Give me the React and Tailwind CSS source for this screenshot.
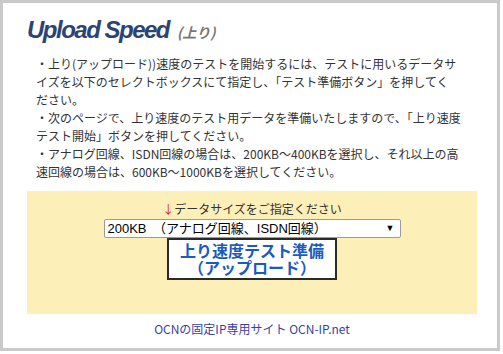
const jp = { fontFamily: '"Noto Sans CJK JP", "Noto Sans", sans-serif' };

const lines = [
  "・上り(アップロード))速度のテストを開始するには、テストに用いるデータサ",
  "イズを以下のセレクトボックスにて指定し、「テスト準備ボタン」を押してく",
  "ださい。",
  "・次のページで、上り速度のテスト用データを準備いたしますので、「上り速度",
  "テスト開始」ボタンを押してください。",
  "・アナログ回線、ISDN回線の場合は、200KB～400KBを選択し、それ以上の高",
  "速回線の場合は、600KB～1000KBを選択してください。",
];

export default function App() {
  return (
    <div className="h-[351px] w-[500px] border-[3px] border-[#c9c9c9] bg-white px-[24px] pt-[13px]" style={jp}>
      <h1 className="flex items-baseline whitespace-nowrap leading-[28px]">
        <span
          className="text-[24px] font-bold italic tracking-[-1.5px] text-[#2b4473]"
          style={{ fontFamily: '"Liberation Sans", Arial, sans-serif' }}
        >
          Upload Speed
        </span>
        <span className="ml-[8px] text-[14px] font-bold italic text-[#777]" style={jp}>
          (上り)
        </span>
      </h1>

      <div className="ml-[9px] mt-[9px] text-[12px] leading-[18px] text-[#333]">
        {lines.map((l) => (
          <div key={l} className="whitespace-nowrap">
            {l}
          </div>
        ))}
      </div>

      <div className="mt-[10px] flex w-[450px] flex-col items-center bg-[#fcefb8] pb-[34px] pt-[9px]">
        <div className="text-[12px] leading-[18px] text-[#333]">
          <span className="text-[#d8262b]">↓</span>データサイズをご指定ください
        </div>
        <div
          className="mt-[1px] flex h-[19px] w-[297px] items-center justify-between rounded-[2px] border border-[#9a9a9a] bg-white pl-[3px] pr-[5px] text-[13px] text-black"
          style={{ fontFamily: '"Liberation Sans", "Noto Sans CJK JP", sans-serif' }}
        >
          <span className="whitespace-nowrap leading-none">200KB　（アナログ回線、ISDN回線）</span>
          <span className="text-[9px] leading-none">▼</span>
        </div>
        <button
          type="button"
          className="flex h-[42px] w-[170px] flex-col items-center justify-center border-2 border-[#2a2a2a] bg-white text-[16px] font-bold leading-[17px] text-[#1a5bbd]"
          style={jp}
        >
          <span>上り速度テスト準備</span>
          <span>（アップロード）</span>
        </button>
      </div>

      <div className="mt-[6px] w-[450px] text-center text-[12px] leading-[18px]">
        <a href="#" className="text-[#3b3f9e]">
          OCNの固定IP専用サイト OCN-IP.net
        </a>
      </div>
    </div>
  );
}
